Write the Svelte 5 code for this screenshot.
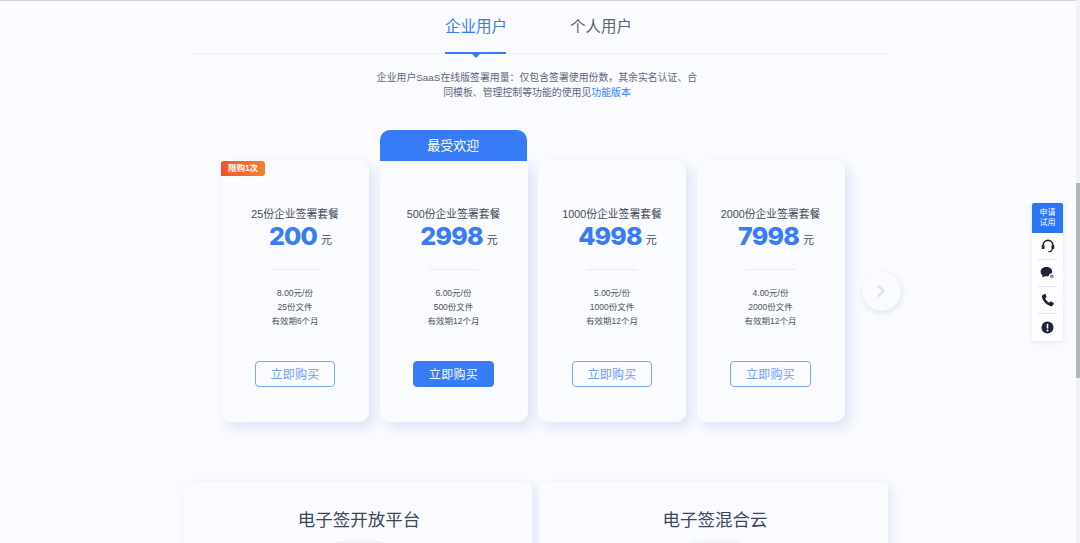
<script>
  const plans = [
    { name: '25份企业签署套餐', price: '200', unit: '8.00元/份', files: '25份文件', term: '有效期6个月', tag: '限购1次' },
    { name: '500份企业签署套餐', price: '2998', unit: '6.00元/份', files: '500份文件', term: '有效期12个月', popular: true },
    { name: '1000份企业签署套餐', price: '4998', unit: '5.00元/份', files: '1000份文件', term: '有效期12个月' },
    { name: '2000份企业签署套餐', price: '7998', unit: '4.00元/份', files: '2000份文件', term: '有效期12个月' }
  ];
</script>

<div class="page">
  <div class="topline"></div>
  <nav class="tabs">
    <span class="tab active">企业用户</span>
    <span class="tab">个人用户</span>
  </nav>
  <p class="intro">企业用户SaaS在线版签署用量：仅包含签署使用份数，其余实名认证、合<br />同模板、管理控制等功能的使用见<a href="#top">功能版本</a></p>

  <div class="carousel">
    <div class="cards">
      {#each plans as p}
        <div class="slot">
          {#if p.popular}<div class="ribbon">最受欢迎</div>{/if}
          <article class="card">
            {#if p.tag}<span class="tag">{p.tag}</span>{/if}
            <h3>{p.name}</h3>
            <div class="price"><b>{p.price}</b><span>元</span></div>
            <hr />
            <ul>
              <li>{p.unit}</li>
              <li>{p.files}</li>
              <li>{p.term}</li>
            </ul>
            <button class:primary={p.popular}>立即购买</button>
          </article>
        </div>
      {/each}
    </div>
    <div class="next">
      <svg width="10" height="14" viewBox="0 0 10 14"><path d="M2 1.500 7.500 7 2 12.500" fill="none" stroke="#d9e0ec" stroke-width="2.400" /></svg>
    </div>
  </div>

  <div class="products">
    <section class="product"><h2>电子签开放平台</h2><i></i></section>
    <section class="product"><h2>电子签混合云</h2><i></i></section>
  </div>

  <aside class="float">
    <div class="apply">申请<br />试用</div>
    <div class="ic">
      <svg width="14" height="14" viewBox="0 0 13 13"><path d="M2 7V5.800a4.500 4.500 0 0 1 9 0V7" fill="none" stroke="#1d2438" stroke-width="1.500" /><rect x=".7" y="5.600" width="2.600" height="3.800" rx="1.100" fill="#1d2438" /><rect x="9.700" y="5.600" width="2.600" height="3.800" rx="1.100" fill="#1d2438" /><path d="M10.500 9c0 1.800-1.600 2.800-3.600 2.800" fill="none" stroke="#1d2438" stroke-width="1.200" /></svg>
    </div>
    <div class="ic">
      <svg width="15" height="14" viewBox="0 0 14 13"><path d="M6 1C2.900 1 .6 2.900.6 5.300c0 1.300.7 2.400 1.800 3.200L2 10.800l2.700-1.300c.4.100.9.100 1.300.1 3.100 0 5.400-1.900 5.400-4.300S9.100 1 6 1Z" fill="#1d2438" /><circle cx="11" cy="9.600" r="2.300" fill="#8a90a0" stroke="#fff" /></svg>
    </div>
    <div class="ic">
      <svg width="14" height="14" viewBox="0 0 13 13"><path d="M3.300.9 1.300 2.200C.8 2.600.7 3.400 1 4.300c1.300 3.700 4 6.500 7.600 7.800.9.300 1.700.2 2.200-.4l1.100-1.600c.2-.3.100-.7-.2-.9L9.500 7.900c-.3-.2-.6-.1-.9.100l-1 1C6 8.200 4.700 6.900 3.900 5.200l1-1c.2-.3.300-.6.100-.9L4.100 1c-.2-.3-.5-.3-.8-.1Z" fill="#1d2438" /></svg>
    </div>
    <div class="ic">
      <svg width="13" height="13" viewBox="0 0 13 13"><circle cx="6.500" cy="6.500" r="6" fill="#1d2438" /><rect x="5.700" y="2.800" width="1.600" height="4.800" rx=".7" fill="#fff" /><circle cx="6.500" cy="9.400" r="1" fill="#fff" /></svg>
    </div>
  </aside>

  <div class="scrollbar"><span></span></div>
</div>

<style>
  :global(body) {
    margin: 0;
    background: #fafbff;
    overflow: hidden;
  }
  .page {
    position: relative;
    height: 543px;
    overflow: hidden;
    background: #fafbff;
    font-family: "Liberation Sans", "Noto Sans CJK SC", sans-serif;
    color: #3c4454;
  }
  .topline { height: 1px; background: #d4d6da; }
  .tabs {
    box-sizing: border-box;
    width: 698px;
    height: 53px;
    margin: 0 0 0 190px;
    padding-right: 2px;
    border-bottom: 1px solid #edf0f6;
    display: flex;
    justify-content: center;
    gap: 64px;
  }
  .tab {
    position: relative;
    box-sizing: border-box;
    width: 61px;
    height: 53px;
    padding-top: 16px;
    font-size: 15.500px;
    line-height: 20px;
    white-space: nowrap;
    color: #5a6374;
    text-align: center;
  }
  .active { color: #387bf6; }
  .active::before {
    content: "";
    position: absolute;
    left: 0; right: 0; bottom: 0;
    height: 2px;
    background: #387bf6;
  }
  .active::after {
    content: "";
    position: absolute;
    left: 50%;
    bottom: -4px;
    margin-left: -4px;
    border: 4px solid transparent;
    border-bottom: 0;
    border-top-color: #387bf6;
  }
  .intro {
    margin: 16px 0 0 0;
    padding-left: 6px;
    width: 1062px;
    font-size: 9.900px;
    line-height: 15px;
    text-align: center;
    color: #5d6678;
  }
  .intro a { color: #387bf6; text-decoration: none; }
  .carousel {
    display: flex;
    align-items: center;
    margin: 30px 0 0 221px;
  }
  .cards { display: flex; gap: 10.500px; }
  .slot { width: 148px; }
  .card {
    position: relative;
    box-sizing: border-box;
    width: 148px;
    height: 262px;
    margin-top: 30px;
    padding-top: 46px;
    border-radius: 10px;
    background: #fafbff;
    box-shadow: 5px 6px 12px rgba(185, 200, 235, .45);
    text-align: center;
  }
  .ribbon {
    position: relative;
    z-index: 1;
    box-sizing: border-box;
    width: 147.500px;
    height: 31px;
    margin-bottom: -31px;
    border-radius: 10px 10px 0 0;
    background: #387bf6;
    color: #fff;
    font-size: 13px;
    line-height: 31px;
    text-align: center;
  }
  .slot:has(.ribbon) .card { border-radius: 0 0 10px 10px; }
  .tag {
    position: absolute;
    left: 0;
    top: 1px;
    width: 44px;
    height: 15px;
    border-radius: 3px 3px 3px 0;
    background: linear-gradient(90deg, #ee5527, #f3822f);
    color: #fff;
    font-size: 8.500px;
    font-weight: 700;
    line-height: 15px;
  }
  h3 {
    margin: 0;
    font-size: 10.800px;
    font-weight: 400;
    line-height: 16px;
    color: #414857;
  }
  .price {
    height: 30px;
    margin-top: -1px;
    padding-left: 11px;
    line-height: 30px;
    white-space: nowrap;
  }
  .price b {
    font-family: "Inter", sans-serif;
    font-size: 25px;
    font-weight: 800;
    letter-spacing: -.8px;
    color: #387bf6;
  }
  .price span {
    margin-left: 4px;
    font-size: 11px;
    vertical-align: 1px;
    color: #414857;
  }
  hr {
    width: 50px;
    height: 1px;
    margin: 18px auto 0;
    border: 0;
    background: #e8ebf1;
  }
  ul {
    list-style: none;
    margin: 16px 0 0;
    padding: 0;
    font-size: 8.500px;
    line-height: 14px;
    color: #4a5160;
  }
  button {
    display: block;
    box-sizing: border-box;
    width: 80.500px;
    height: 26px;
    margin: 33px auto 0;
    padding: 1px 0 0;
    border: 1px solid #79a5f8;
    border-radius: 4px;
    background: transparent;
    color: #6e9df8;
    font: 12px/24px "Liberation Sans", "Noto Sans CJK SC", sans-serif;
    letter-spacing: .3px;
  }
  button.primary { background: #387bf6; border-color: #387bf6; color: #fff; }
  .next {
    width: 39px;
    height: 39px;
    margin-left: 17px;
    margin-top: 30px;
    flex: none;
    border-radius: 50%;
    background: #fafbff;
    box-shadow: 1px 2px 5px rgba(190, 205, 235, .55);
    display: flex;
    align-items: center;
    justify-content: center;
  }
  .products {
    display: flex;
    gap: 7px;
    width: 705px;
    margin: 60px 0 0 183px;
  }
  .product {
    flex: 1;
    height: 140px;
    padding: 26px 0 0 3px;
    box-sizing: border-box;
    border-radius: 6px;
    background: #fafbff;
    box-shadow: 3px 3px 10px rgba(185, 200, 235, .4);
    text-align: center;
  }
  h2 {
    margin: 0;
    font-size: 17.500px;
    font-weight: 400;
    line-height: 24px;
    color: #3d4656;
  }
  .product i {
    display: block;
    width: 48px;
    height: 30px;
    margin: 9px auto 0;
    box-sizing: border-box;
    border: 1px solid #e6eaf4;
    border-radius: 3px;
  }
  .float {
    position: absolute;
    left: 1032px;
    top: 203px;
    width: 31px;
    height: 138px;
    background: #fff;
    border-radius: 2px;
    box-shadow: 0 1px 5px rgba(190, 200, 225, .4);
    overflow: hidden;
  }
  .apply {
    box-sizing: border-box;
    height: 30px;
    padding-top: 5px;
    background: #2a74f6;
    color: #fff;
    font-size: 8px;
    line-height: 10px;
    text-align: center;
  }
  .ic {
    height: 26px;
    margin: 0 6px;
    display: flex;
    align-items: center;
    justify-content: center;
    border-bottom: 1px solid #e6e8ed;
  }
  .ic:last-child { border-bottom: 0; }
  .scrollbar {
    position: absolute;
    right: 0;
    top: 0;
    width: 4px;
    height: 543px;
    background: #f1f2f4;
  }
  .scrollbar span {
    display: block;
    height: 195px;
    margin-top: 183px;
    background: #b0b4bb;
  }
</style>
